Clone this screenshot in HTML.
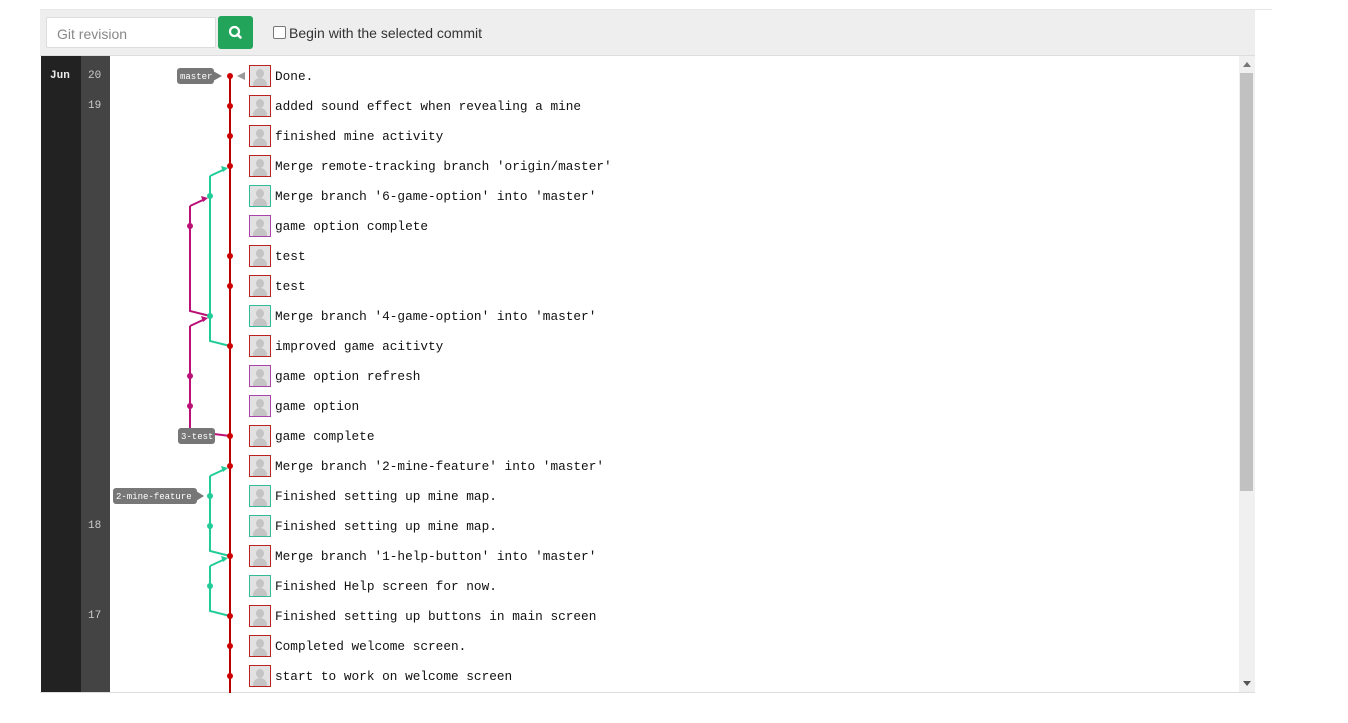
<!DOCTYPE html>
<html><head><meta charset="utf-8"><style>
body{margin:0;background:#fff;width:1348px;height:723px;position:relative;overflow:hidden;font-family:"Liberation Sans",sans-serif}
.topline{position:absolute;left:40px;top:9px;width:1232px;height:1px;background:#e6e6e6}
.hdr{position:absolute;left:40px;top:10px;width:1215px;height:45px;background:#eee;border-bottom:1px solid #ddd}
.inp{position:absolute;left:46px;top:17px;width:170px;height:31px;background:#fff;border:1px solid #ddd;border-radius:2px;box-sizing:border-box;color:#888;font-size:14px;padding:8px 10px}
.btn{position:absolute;left:218px;top:16px;width:35px;height:33px;background:#22a55a;border-radius:3px}
.chk{position:absolute;left:273px;top:26px;width:11px;height:11px;border:1px solid #777;border-radius:2px;background:#fff}
.lbl{position:absolute;left:289px;top:25px;font-size:14px;color:#333}
.c1{position:absolute;left:41px;top:56px;width:40px;height:637px;background:#222}
.c2{position:absolute;left:81px;top:56px;width:29px;height:637px;background:#444}
.d{position:absolute;font-family:"Liberation Mono",monospace;font-size:11px;color:#ccc}
.bottom{position:absolute;left:40px;top:692px;width:1215px;height:1px;background:#ddd}
.sb{position:absolute;left:1239px;top:56px;width:16px;height:637px;background:#f0f0f0}
.thumb{position:absolute;left:1240px;top:73px;width:13px;height:418px;background:#c1c1c1}
.row{position:absolute;left:249px;height:22px}
.av{position:absolute;left:0;top:0;width:20px;height:20px;border:1px solid #b22;background:#e2e2e2;overflow:hidden}
.av.t{border-color:#3b9}.av.m{border-color:#a4a}
.av:before{content:"";position:absolute;left:6px;top:3px;width:8px;height:9px;border-radius:50%;background:#c4c4c4}
.av:after{content:"";position:absolute;left:3px;top:12px;width:14px;height:10px;border-radius:7px 7px 0 0;background:#c4c4c4}
.tx{position:absolute;left:26px;top:4px;font-family:"Liberation Mono",monospace;font-size:12.75px;color:#111;white-space:pre}
</style></head><body>
<div class="topline"></div>
<div class="hdr"></div>
<div class="inp">Git revision</div>
<div class="btn"><svg width="35" height="33"><circle cx="16.5" cy="15.5" r="4.5" fill="none" stroke="#fff" stroke-width="2.2"/><line x1="19.5" y1="18.5" x2="22.5" y2="21.5" stroke="#fff" stroke-width="2.6" stroke-linecap="round"/></svg></div>
<div class="chk"></div><div class="lbl">Begin with the selected commit</div>
<div class="c1"></div><div class="c2"></div>
<div class="d" style="left:50px;top:70px;color:#eee;font-weight:bold">Jun</div>
<div class="d" style="left:88px;top:70px">20</div>
<div class="d" style="left:88px;top:100px">19</div>
<div class="d" style="left:88px;top:520px">18</div>
<div class="d" style="left:88px;top:610px">17</div>
<div class="sb"></div><div class="thumb"></div>
<svg style="position:absolute;left:1241px;top:60px" width="12" height="8"><path d="M2 7 L6 2 L10 7Z" fill="#777"/></svg>
<svg style="position:absolute;left:1241px;top:680px" width="12" height="8"><path d="M2 1 L6 6 L10 1Z" fill="#555"/></svg>
<div class="bottom"></div>
<svg style="position:absolute;left:0;top:0" width="260" height="700">
<g fill="none" stroke-width="2">
<line x1="230" y1="76" x2="230" y2="693" stroke="#b00"/>
<polyline points="210,176 210,341 230,346" stroke="#2c9"/>
<line x1="210" y1="176" x2="225" y2="169" stroke="#2c9"/>
<polyline points="190,206 190,311 210,316" stroke="#b17"/>
<line x1="190" y1="206" x2="205" y2="199" stroke="#b17"/>
<polyline points="190,326 190,431 230,436" stroke="#b17"/>
<line x1="190" y1="326" x2="205" y2="319" stroke="#b17"/>
<polyline points="210,476 210,551 230,556" stroke="#2c9"/>
<line x1="210" y1="476" x2="225" y2="469" stroke="#2c9"/>
<polyline points="210,566 210,611 230,616" stroke="#2c9"/>
<line x1="210" y1="566" x2="225" y2="559" stroke="#2c9"/>
</g>
<g fill="#2c9"><path d="M228 168 L221 166 L223 172Z"/><path d="M228 468 L221 466 L223 472Z"/><path d="M228 558 L221 556 L223 562Z"/></g>
<g fill="#b17"><path d="M208 198 L201 196 L203 202Z"/><path d="M208 318 L201 316 L203 322Z"/></g>
<g fill="#c00">
<circle cx="230" cy="76" r="3"/><circle cx="230" cy="106" r="3"/><circle cx="230" cy="136" r="3"/><circle cx="230" cy="166" r="3"/><circle cx="230" cy="256" r="3"/><circle cx="230" cy="286" r="3"/><circle cx="230" cy="346" r="3"/><circle cx="230" cy="436" r="3"/><circle cx="230" cy="466" r="3"/><circle cx="230" cy="556" r="3"/><circle cx="230" cy="616" r="3"/><circle cx="230" cy="646" r="3"/><circle cx="230" cy="676" r="3"/>
</g>
<g fill="#2c9"><circle cx="210" cy="196" r="3"/><circle cx="210" cy="316" r="3"/><circle cx="210" cy="496" r="3"/><circle cx="210" cy="526" r="3"/><circle cx="210" cy="586" r="3"/></g>
<g fill="#b17"><circle cx="190" cy="226" r="3"/><circle cx="190" cy="376" r="3"/><circle cx="190" cy="406" r="3"/></g>
<g font-family="Liberation Mono,monospace" font-size="9" fill="#fff">
<rect x="177" y="68" width="37" height="16" rx="3" fill="#777"/><path d="M213 71 L222 76 L213 81Z" fill="#777"/><text x="180" y="79">master</text>
<path d="M237 76 L245 72 L245 80Z" fill="#999"/>
<rect x="178" y="428" width="37" height="16" rx="3" fill="#777"/><text x="181" y="439">3-test</text>
<rect x="113" y="488" width="84" height="16" rx="3" fill="#777"/><path d="M196 491 L204 496 L196 501Z" fill="#777"/><text x="116" y="499">2-mine-feature</text>
</g>
</svg>
<div class="row" style="top:65px"><div class="av"></div><div class="tx">Done.</div></div>
<div class="row" style="top:95px"><div class="av"></div><div class="tx">added sound effect when revealing a mine</div></div>
<div class="row" style="top:125px"><div class="av"></div><div class="tx">finished mine activity</div></div>
<div class="row" style="top:155px"><div class="av"></div><div class="tx">Merge remote-tracking branch 'origin/master'</div></div>
<div class="row" style="top:185px"><div class="av t"></div><div class="tx">Merge branch '6-game-option' into 'master'</div></div>
<div class="row" style="top:215px"><div class="av m"></div><div class="tx">game option complete</div></div>
<div class="row" style="top:245px"><div class="av"></div><div class="tx">test</div></div>
<div class="row" style="top:275px"><div class="av"></div><div class="tx">test</div></div>
<div class="row" style="top:305px"><div class="av t"></div><div class="tx">Merge branch '4-game-option' into 'master'</div></div>
<div class="row" style="top:335px"><div class="av"></div><div class="tx">improved game acitivty</div></div>
<div class="row" style="top:365px"><div class="av m"></div><div class="tx">game option refresh</div></div>
<div class="row" style="top:395px"><div class="av m"></div><div class="tx">game option</div></div>
<div class="row" style="top:425px"><div class="av"></div><div class="tx">game complete</div></div>
<div class="row" style="top:455px"><div class="av"></div><div class="tx">Merge branch '2-mine-feature' into 'master'</div></div>
<div class="row" style="top:485px"><div class="av t"></div><div class="tx">Finished setting up mine map.</div></div>
<div class="row" style="top:515px"><div class="av t"></div><div class="tx">Finished setting up mine map.</div></div>
<div class="row" style="top:545px"><div class="av"></div><div class="tx">Merge branch '1-help-button' into 'master'</div></div>
<div class="row" style="top:575px"><div class="av t"></div><div class="tx">Finished Help screen for now.</div></div>
<div class="row" style="top:605px"><div class="av"></div><div class="tx">Finished setting up buttons in main screen</div></div>
<div class="row" style="top:635px"><div class="av"></div><div class="tx">Completed welcome screen.</div></div>
<div class="row" style="top:665px"><div class="av"></div><div class="tx">start to work on welcome screen</div></div>
</body></html>
